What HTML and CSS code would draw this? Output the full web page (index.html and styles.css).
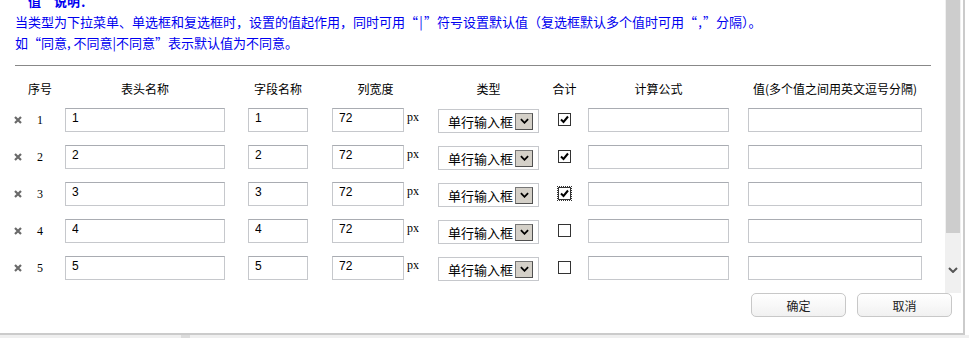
FILE: index.html
```html
<!DOCTYPE html>
<html lang="zh-CN">
    <head>
        <meta charset="UTF-8">
        <title>字段设置</title>
        <link rel="stylesheet" href="styles.css">
    </head>
    <body>
        <div class="dialog">
            <div class="body">
                <div class="scroll">
                    <div class="note">
                        <p class="note-title"><span class="qo">“</span>值<span class="qc">”</span>说明：</p>
                        <p>当类型为下拉菜单、单选框和复选框时，设置的值起作用，同时可用<span class="qo">“</span><span class="sym">|</span><span class="qc">”</span>符号设置默认值（复选框默认多个值时可用<span class="qo">“</span><span class="sym">,</span><span class="qc">”</span>分隔）。</p>
                        <p>如<span class="qo">“</span>同意, 不同意|不同意<span class="qc">”</span>表示默认值为不同意。</p>
                    </div>
                    <div class="rule"></div>
                    <div class="fields">
                        <div class="row head">
                            <div>序号</div>
                            <div>表头名称</div>
                            <div>字段名称</div>
                            <div>列宽度</div>
                            <div>类型</div>
                            <div>合计</div>
                            <div>计算公式</div>
                            <div>值(多个值之间用英文逗号分隔)</div>
                        </div>

                        <div class="row">
                            <div class="seq"><span class="del"><svg viewBox="0 0 8 8"><path d="M1 1L7 7M7 1L1 7"/></svg></span><span class="num">1</span></div>
                            <div><input class="text w160" value="1"></div>
                            <div><input class="text w60" value="1"></div>
                            <div><input class="text w72" value="72"><span class="unit">px</span></div>
                            <div><span class="select"><span>单行输入框</span><span class="drop"><svg viewBox="0 0 10 6"><path d="M1 1L5 5L9 1"/></svg></span></span></div>
                            <div><span class="check on"><svg viewBox="0 0 11 11"><path d="M2 5.5L4.5 8L9 2.5"/></svg></span></div>
                            <div><input class="text w141"></div>
                            <div><input class="text w174"></div>
                        </div>

                        <div class="row">
                            <div class="seq"><span class="del"><svg viewBox="0 0 8 8"><path d="M1 1L7 7M7 1L1 7"/></svg></span><span class="num">2</span></div>
                            <div><input class="text w160" value="2"></div>
                            <div><input class="text w60" value="2"></div>
                            <div><input class="text w72" value="72"><span class="unit">px</span></div>
                            <div><span class="select"><span>单行输入框</span><span class="drop"><svg viewBox="0 0 10 6"><path d="M1 1L5 5L9 1"/></svg></span></span></div>
                            <div><span class="check on"><svg viewBox="0 0 11 11"><path d="M2 5.5L4.5 8L9 2.5"/></svg></span></div>
                            <div><input class="text w141"></div>
                            <div><input class="text w174"></div>
                        </div>

                        <div class="row">
                            <div class="seq"><span class="del"><svg viewBox="0 0 8 8"><path d="M1 1L7 7M7 1L1 7"/></svg></span><span class="num">3</span></div>
                            <div><input class="text w160" value="3"></div>
                            <div><input class="text w60" value="3"></div>
                            <div><input class="text w72" value="72"><span class="unit">px</span></div>
                            <div><span class="select"><span>单行输入框</span><span class="drop"><svg viewBox="0 0 10 6"><path d="M1 1L5 5L9 1"/></svg></span></span></div>
                            <div><span class="check on focus"><svg viewBox="0 0 11 11"><path d="M2 5.5L4.5 8L9 2.5"/></svg></span></div>
                            <div><input class="text w141"></div>
                            <div><input class="text w174"></div>
                        </div>

                        <div class="row">
                            <div class="seq"><span class="del"><svg viewBox="0 0 8 8"><path d="M1 1L7 7M7 1L1 7"/></svg></span><span class="num">4</span></div>
                            <div><input class="text w160" value="4"></div>
                            <div><input class="text w60" value="4"></div>
                            <div><input class="text w72" value="72"><span class="unit">px</span></div>
                            <div><span class="select"><span>单行输入框</span><span class="drop"><svg viewBox="0 0 10 6"><path d="M1 1L5 5L9 1"/></svg></span></span></div>
                            <div><span class="check"></span></div>
                            <div><input class="text w141"></div>
                            <div><input class="text w174"></div>
                        </div>

                        <div class="row">
                            <div class="seq"><span class="del"><svg viewBox="0 0 8 8"><path d="M1 1L7 7M7 1L1 7"/></svg></span><span class="num">5</span></div>
                            <div><input class="text w160" value="5"></div>
                            <div><input class="text w60" value="5"></div>
                            <div><input class="text w72" value="72"><span class="unit">px</span></div>
                            <div><span class="select"><span>单行输入框</span><span class="drop"><svg viewBox="0 0 10 6"><path d="M1 1L5 5L9 1"/></svg></span></span></div>
                            <div><span class="check"></span></div>
                            <div><input class="text w141"></div>
                            <div><input class="text w174"></div>
                        </div>
                    </div>
                </div>
                <div class="scrollbar">
                    <div class="thumb"></div>
                    <svg class="down" viewBox="0 0 10 6"><path d="M1 1L5 5L9 1"/></svg>
                </div>
            </div>
            <div class="actions">
                <button class="btn">确定</button>
                <button class="btn">取消</button>
            </div>
        </div>
        <div class="foot"><span class="foot-mark"></span></div>
    </body>
</html>
```

FILE: styles.css
```css
* {
    margin: 0;
    padding: 0;
    box-sizing: border-box
}

body {
    background: #fff;
    color: #000;
    font-family: "Noto Sans CJK SC", sans-serif;
    font-size: 12px
}

.dialog {
    width: 965px;
    height: 335px;
    border-right: 2px solid #cbcbcb;
    border-bottom: 2px solid #cbcbcb;
    display: flex;
    flex-direction: column
}

.body {
    display: flex;
    height: 293px
}

.scroll {
    width: 945px;
    overflow: hidden;
    padding-left: 15px
}

.note {
    margin-top: -10px;
    color: #0000f0;
    font-size: 13px;
    line-height: 21px;
    white-space: nowrap
}

.note-title {
    font-weight: 700
}

/* full-width curly quotes, as in the original font */
.qo,
.qc {
    display: inline-block;
    width: 13px
}

.qo {
    text-align: right
}

.qc {
    text-align: left
}

.sym {
    display: inline-block;
    width: 6px;
    text-align: center
}

.rule {
    width: 916px;
    margin-top: 12px;
    border-top: 1px solid #888
}

.row {
    display: grid;
    grid-template-columns: 50px 160px 106px 89px 137px 15px 173px 180px;
    grid-auto-rows: 24px;
    align-items: center;
    padding: 6px 0 7px
}

.row > div {
    display: flex;
    justify-content: center;
    align-items: center
}

.row > .seq {
    justify-content: flex-start
}

.head {
    grid-auto-rows: 14px;
    padding: 16px 0 6px;
    line-height: 14px;
    white-space: nowrap
}

.del {
    display: flex;
    width: 8px;
    height: 8px;
    margin-left: -1px
}

.del svg {
    width: 8px;
    height: 8px;
    stroke: #6a6a6a;
    stroke-width: 2.2;
    fill: none
}

.num {
    margin-left: 15px;
    font-family: "Liberation Serif", serif;
    font-size: 12px
}

.text {
    height: 24px;
    padding: 0 6px 4px;
    border: 1px solid #c6c8cc;
    border-top-color: #a9acb2;
    font-family: "Liberation Sans", sans-serif;
    font-size: 12px;
    color: #000;
    outline: none
}

.w160 { width: 160px }
.w60 { width: 60px }
.w72 { width: 72px }
.w141 { width: 141px }
.w174 { width: 174px }

.unit {
    width: 15px;
    padding-left: 3px;
    margin-top: -5px;
    font-family: "Liberation Serif", serif;
    font-size: 12px
}

.select {
    display: flex;
    align-items: center;
    width: 101px;
    height: 24px;
    margin-top: 2px;
    padding-left: 9px;
    border: 1px solid #c6c8cc;
    font-size: 13px;
    white-space: nowrap
}

.drop {
    display: flex;
    justify-content: center;
    align-items: center;
    width: 18px;
    height: 17px;
    margin-left: 2px;
    background: #d4d0c8;
    border: 1px solid #505050;
    border-top-color: #777;
    border-left-color: #777
}

.drop svg {
    width: 9px;
    height: 6px;
    stroke: #000;
    stroke-width: 2;
    fill: none
}

.check {
    display: flex;
    justify-content: center;
    align-items: center;
    width: 13px;
    height: 13px;
    margin-top: -1px;
    border: 1px solid #333;
    background: #fff
}

.check svg {
    width: 11px;
    height: 11px;
    stroke: #000;
    stroke-width: 2;
    fill: none
}

.focus {
    outline: 1px dotted #333
}

.scrollbar {
    width: 16px;
    background: #f0f0f0;
    display: flex;
    flex-direction: column;
    align-items: center
}

.thumb {
    width: 14px;
    height: 233px;
    background: #cdcdcd
}

.down {
    width: 10px;
    height: 6px;
    margin-top: auto;
    margin-bottom: 20px;
    stroke: #555;
    stroke-width: 2;
    fill: none
}

.actions {
    flex: 1;
    display: flex;
    justify-content: flex-end;
    gap: 11px;
    padding-right: 11px
}

.btn {
    width: 95px;
    height: 24px;
    border: 1px solid #c8c8c8;
    border-radius: 5px;
    background: linear-gradient(#fff, #f1f1f1);
    font-family: "Noto Sans CJK SC", sans-serif;
    font-size: 12px;
    color: #222
}

.foot {
    height: 3px;
    background: #efefef;
    padding-left: 181px
}

.foot-mark {
    display: block;
    width: 9px;
    height: 3px;
    background: #dcdcdc
}
```
